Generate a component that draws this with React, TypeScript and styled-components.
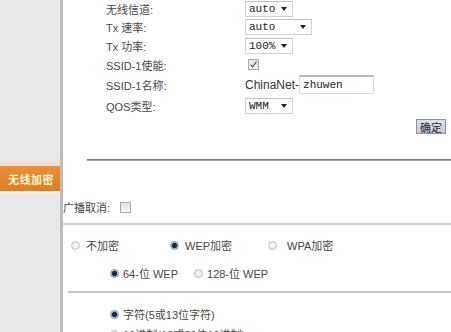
import React from 'react';
import styled, { createGlobalStyle } from 'styled-components';

const Global = createGlobalStyle`
  html, body { margin: 0; padding: 0; background: #fff; }
  body {
    width: 451px; height: 332px; overflow: hidden;
    font-family: "Liberation Sans", "Noto Sans CJK SC", sans-serif;
    font-size: 11px; color: #474747;
  }
`;

const Page = styled.div`
  display: flex;
  height: 332px;
`;

const Sidebar = styled.aside`
  width: 60px;
  flex: none;
  background: #e9e9e9;
  border-right: 3px solid #bdbdbd;
  display: flex;
  flex-direction: column;
`;

const SideSpacer = styled.div<{ $h: number }>`
  height: ${p => p.$h}px;
  flex: none;
`;

const SideGlow = styled.div`
  height: 8px;
  background: linear-gradient(#e9e9e9, #f1dcc6);
`;

const OrangeTab = styled.div`
  height: 25px;
  background: linear-gradient(#e6903a, #dc7f26);
  color: #fff3cc;
  font-weight: bold;
  font-size: 11px;
  display: flex;
  align-items: center;
  padding-left: 8px;
  letter-spacing: 0.5px;
`;

const SideFade = styled.div`
  height: 6px;
  background: linear-gradient(#f5ece2, #e9e9e9);
`;

const Content = styled.main`
  flex: 1;
  display: flex;
  flex-direction: column;
  background: #fff;
`;

const Form = styled.div`
  display: grid;
  grid-template-columns: 139px 1fr;
  grid-template-rows: 17px 19px 19px 19px 21px 21px;
  padding-left: 43px;
`;

const Label = styled.div`
  display: flex;
  align-items: center;
  white-space: nowrap;
`;

const Cell = styled.div<{ $pl?: number }>`
  display: flex;
  align-items: center;
  padding-left: ${p => p.$pl ?? 0}px;
`;

const Select = styled.div<{ $w: number }>`
  width: ${p => p.$w}px;
  height: 16px;
  box-sizing: border-box;
  border: 1px solid #d2d2d2;
  border-top-color: #c2c2c2;
  background: #fff;
  display: flex;
  align-items: center;
  justify-content: space-between;
  padding: 0 5px 0 3px;
  font-family: "Liberation Mono", "Noto Sans CJK SC", monospace;
  font-size: 11px;
  color: #222;
`;

const Arrow = styled.span`
  width: 0; height: 0;
  border-left: 3.5px solid transparent;
  border-right: 3.5px solid transparent;
  border-top: 4px solid #222;
`;

const CheckBox = styled.span<{ $ml?: number }>`
  width: 11px; height: 11px;
  box-sizing: border-box;
  margin-left: ${p => p.$ml ?? 0}px;
  border: 1px solid #a9a9a9;
  background: linear-gradient(#e2e2e2, #f4f4f4);
  display: inline-flex;
  align-items: center;
  justify-content: center;
`;

const Prefix = styled.span`
  font-size: 12px;
  color: #333;
`;

const TextInput = styled.div`
  width: 75px;
  height: 19px;
  box-sizing: border-box;
  border: 1px solid #dadada;
  border-top: 2px solid #b8b8b8;
  display: flex;
  align-items: center;
  padding-left: 3px;
  font-family: "Liberation Mono", monospace;
  font-size: 11px;
  color: #222;
`;

const ButtonRow = styled.div`
  display: flex;
  justify-content: flex-end;
  padding-right: 5px;
  margin-top: 3px;
`;

const Button = styled.div`
  width: 30px;
  height: 15px;
  box-sizing: border-box;
  border: 1px solid #8c949c;
  background: linear-gradient(#dfe3e7, #c4cad0);
  font-size: 11px;
  color: #1d2a3a;
  display: flex;
  align-items: center;
  justify-content: center;
`;

const Divider = styled.div<{ $mt: number; $ml: number; $color: string; $h: number }>`
  margin-top: ${p => p.$mt}px;
  margin-left: ${p => p.$ml}px;
  height: ${p => p.$h}px;
  background: ${p => p.$color};
  flex: none;
`;

const Row = styled.div<{ $mt: number; $pl: number }>`
  display: flex;
  align-items: center;
  height: 20px;
  margin-top: ${p => p.$mt}px;
  padding-left: ${p => p.$pl}px;
  white-space: nowrap;
  flex: none;
`;

const OptionGrid = styled.div`
  display: grid;
  grid-template-columns: 99px 98px auto;
  align-items: center;
  height: 20px;
  margin-top: 10px;
  padding-left: 8px;
  flex: none;
`;

const Option = styled.label<{ $gap: number; $after?: number }>`
  display: flex;
  align-items: center;
  gap: ${p => p.$gap}px;
  margin-right: ${p => p.$after ?? 0}px;
  white-space: nowrap;
`;

const Radio = styled.span<{ $on?: boolean }>`
  width: 9px; height: 9px;
  border-radius: 50%;
  box-sizing: border-box;
  flex: none;
  border: 1px solid ${p => (p.$on ? '#8595a8' : '#c4c4c4')};
  background: ${p =>
    p.$on
      ? 'radial-gradient(circle, #1e2a3c 0 2.2px, #7f9ab8 2.8px, #dfe8f0 3.6px)'
      : 'radial-gradient(circle, #f4f4f4 0 2px, #e3e3e3 3.5px)'};
`;

const Check = () => (
  <svg width="9" height="9" viewBox="0 0 9 9">
    <path d="M1.5 4.5 L3.5 7 L7.5 1.5" fill="none" stroke="#4a5a6a" strokeWidth="1.2" />
  </svg>
);

export default function App() {
  return (
    <>
      <Global />
      <Page>
        <Sidebar>
          <SideSpacer $h={158} />
          <SideGlow />
          <OrangeTab>无线加密</OrangeTab>
          <SideFade />
        </Sidebar>
        <Content>
          <Form>
            <Label>无线信道:</Label>
            <Cell><Select $w={48}>auto<Arrow /></Select></Cell>
            <Label>Tx 速率:</Label>
            <Cell><Select $w={67}>auto<Arrow /></Select></Cell>
            <Label>Tx 功率:</Label>
            <Cell><Select $w={48}>100%<Arrow /></Select></Cell>
            <Label>SSID-1使能:</Label>
            <Cell $pl={3}><CheckBox><Check /></CheckBox></Cell>
            <Label>SSID-1名称:</Label>
            <Cell><Prefix>ChinaNet-</Prefix><TextInput>zhuwen</TextInput></Cell>
            <Label>QOS类型:</Label>
            <Cell><Select $w={48}>WMM<Arrow /></Select></Cell>
          </Form>
          <ButtonRow><Button>确定</Button></ButtonRow>
          <Divider $mt={25} $ml={24} $h={2} $color="linear-gradient(#6a6a6a, #b5b5b5)" />
          <Row $mt={36} $pl={0}>
            广播取消:<CheckBox $ml={10} />
          </Row>
          <Divider $mt={6} $ml={0} $h={2} $color="#cfcfcf" />
          <OptionGrid>
            <Option $gap={6}><Radio />不加密</Option>
            <Option $gap={6}><Radio $on />WEP加密</Option>
            <Option $gap={10}><Radio />WPA加密</Option>
          </OptionGrid>
          <Row $mt={8} $pl={47}>
            <Option $gap={4} $after={16}><Radio $on />64-位 WEP</Option>
            <Option $gap={4}><Radio />128-位 WEP</Option>
          </Row>
          <Divider $mt={8} $ml={5} $h={2} $color="#c6c6c6" />
          <Row $mt={11} $pl={47}>
            <Option $gap={4}><Radio $on />字符(5或13位字符)</Option>
          </Row>
          <Row $mt={0} $pl={47}>
            <Option $gap={4}><Radio />16进制(10或26位16进制)</Option>
          </Row>
        </Content>
      </Page>
    </>
  );
}
